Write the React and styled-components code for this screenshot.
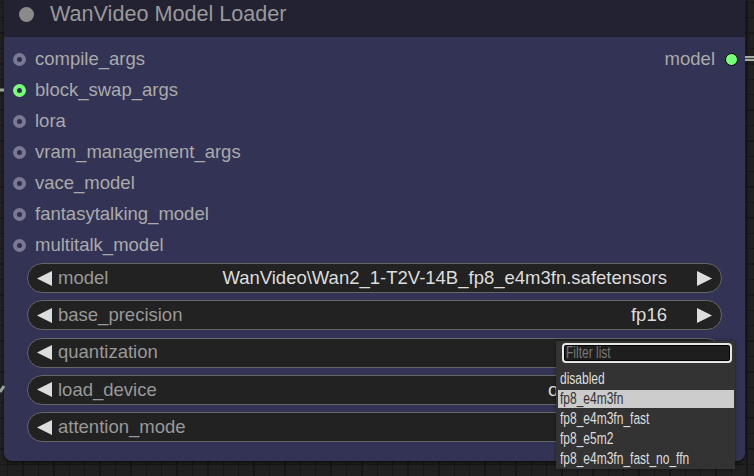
import React from "react";
import styled, { createGlobalStyle } from "styled-components";

const Global = createGlobalStyle`
  html, body { margin: 0; padding: 0; }
  body {
    width: 754px;
    height: 476px;
    overflow: hidden;
    background-color: #202020;
    background-image:
      repeating-linear-gradient(90deg, transparent 0 7px, #171717 7px 8.5px, transparent 8.5px 15.4px),
      repeating-linear-gradient(0deg, transparent 0 11px, #171717 11px 12.5px, transparent 12.5px 15.4px);
    font-family: "Liberation Sans", Arial, sans-serif;
  }
`;

const Canvas = styled.div`
  position: relative;
  width: 754px;
  height: 476px;
  padding-left: 4px;
  box-sizing: border-box;
`;

const Node = styled.div`
  width: 741px;
  border-radius: 0 0 8px 8px;
  background: #333355;
  box-shadow: 0 2px 3px rgba(0, 0, 0, 0.5);
`;

const TitleBar = styled.div`
  height: 37px;
  box-sizing: border-box;
  padding: 0 0 9px 15px;
  display: flex;
  align-items: center;
  gap: 16px;
  background: #222233;
`;

const TitleDot = styled.div`
  width: 15px;
  height: 15px;
  border-radius: 50%;
  background: #8a8a8a;
`;

const Title = styled.div`
  font-size: 21.6px;
  line-height: 1;
  color: #999;
`;

const Body = styled.div`
  padding: 7px 23px 19px 23px;
  display: flex;
  flex-direction: column;
`;

const SlotRow = styled.div`
  height: 31px;
  margin: 0 -15.5px 0 -14.5px;
  display: flex;
  align-items: center;
  justify-content: space-between;
`;

const Slot = styled.div`
  display: flex;
  align-items: center;
  gap: 9.5px;
  font-size: 18.5px;
  color: #aaa;
  line-height: 1;
`;

const InDot = styled.div`
  width: 13px;
  height: 13px;
  box-sizing: border-box;
  border-radius: 50%;
  border: 4.5px solid ${(p) => (p.$on ? "#77ff77" : "#7a7892")};
  background: #2e2d4a;
`;

const OutDot = styled.div`
  width: 13px;
  height: 13px;
  box-sizing: border-box;
  border-radius: 50%;
  border: 1.5px solid #000;
  background: #77ff77;
`;

const Widgets = styled.div`
  margin-top: 2px;
  display: flex;
  flex-direction: column;
  gap: 7.25px;
`;

const Widget = styled.div`
  height: 30px;
  box-sizing: border-box;
  border: 1px solid #666;
  border-radius: 15px;
  background: #222;
  display: flex;
  align-items: center;
  padding: 0 9px;
  font-size: 18.5px;
  line-height: 1;
`;

const Label = styled.span`
  flex: 1;
  margin-left: 6px;
  color: #999;
  white-space: nowrap;
`;

const Value = styled.span`
  color: #ddd;
  margin-right: 30px;
  white-space: nowrap;
`;

const Arrow = ({ dir }) => (
  <svg width="15" height="15" viewBox="0 0 15 15" style={{ flex: "none" }}>
    {dir === "left" ? (
      <polygon points="15,0 15,15 0,7.5" fill="#ddd" />
    ) : (
      <polygon points="0,0 0,15 15,7.5" fill="#ddd" />
    )}
  </svg>
);

const Menu = styled.div`
  position: absolute;
  left: 556px;
  top: 341px;
  width: 179px;
  height: 128px;
  box-sizing: border-box;
  background: #333;
  padding: 2px 1px 0 2px;
  font-family: "Liberation Sans", sans-serif;
  font-size: 16px;
  box-shadow: 0 0 4px rgba(0, 0, 0, 0.4);
`;

const Narrow = styled.span`
  display: inline-block;
  white-space: nowrap;
  transform: scaleX(0.75);
  transform-origin: left center;
`;

const Filter = styled.div`
  margin: 0 2px 0 4px;
  height: 20px;
  box-sizing: border-box;
  border: 2px solid #e6e6e6;
  border-radius: 4px;
  background: #1e1e1e;
  box-shadow: inset 0 0 0 1px #000;
  color: #777;
  padding-left: 2px;
  display: flex;
  align-items: center;
  line-height: 1;
`;

const Items = styled.div`
  margin-top: 7px;
  display: flex;
  flex-direction: column;
  gap: 2px;
`;

const Item = styled.div`
  height: 18px;
  display: flex;
  align-items: center;
  padding-left: 2px;
  line-height: 1;
  color: ${(p) => (p.$sel ? "#333" : "#ddd")};
  background: ${(p) => (p.$sel ? "#cccccc" : "transparent")};
`;

const Wires = styled.svg`
  position: absolute;
  left: 0;
  top: 0;
  pointer-events: none;
`;

const inputs = [
  "compile_args",
  "block_swap_args",
  "lora",
  "vram_management_args",
  "vace_model",
  "fantasytalking_model",
  "multitalk_model",
];

const widgets = [
  ["model", "WanVideo\\Wan2_1-T2V-14B_fp8_e4m3fn.safetensors"],
  ["base_precision", "fp16"],
  ["quantization", "disabled"],
  ["load_device", "offload_device"],
  ["attention_mode", "sdpa"],
];

const options = ["disabled", "fp8_e4m3fn", "fp8_e4m3fn_fast", "fp8_e5m2", "fp8_e4m3fn_fast_no_ffn"];

export default function App() {
  return (
    <>
      <Global />
      <Canvas>
        <Wires width="754" height="476">
          <line x1="0" y1="90" x2="4" y2="90" stroke="#9aa89a" strokeWidth="3" />
          <path d="M0 392 L4 386" stroke="#9aa89a" strokeWidth="3" fill="none" />
          <line x1="745" y1="58.5" x2="754" y2="58.5" stroke="#a9b3a9" strokeWidth="5" />
          <line x1="745" y1="58.5" x2="754" y2="58.5" stroke="#3a3f3a" strokeWidth="1.2" />
        </Wires>
        <Node>
          <TitleBar>
            <TitleDot />
            <Title>WanVideo Model Loader</Title>
          </TitleBar>
          <Body>
            {inputs.map((name, i) => (
              <SlotRow key={name}>
                <Slot>
                  <InDot $on={name === "block_swap_args"} />
                  {name}
                </Slot>
                {i === 0 && (
                  <Slot>
                    model
                    <OutDot />
                  </Slot>
                )}
              </SlotRow>
            ))}
            <Widgets>
              {widgets.map(([l, v]) => (
                <Widget key={l}>
                  <Arrow dir="left" />
                  <Label>{l}</Label>
                  <Value>{v}</Value>
                  <Arrow dir="right" />
                </Widget>
              ))}
            </Widgets>
          </Body>
        </Node>
        <Menu>
          <Filter>
            <Narrow>Filter list</Narrow>
          </Filter>
          <Items>
            {options.map((o) => (
              <Item key={o} $sel={o === "fp8_e4m3fn"}>
                <Narrow>{o}</Narrow>
              </Item>
            ))}
          </Items>
        </Menu>
      </Canvas>
    </>
  );
}
